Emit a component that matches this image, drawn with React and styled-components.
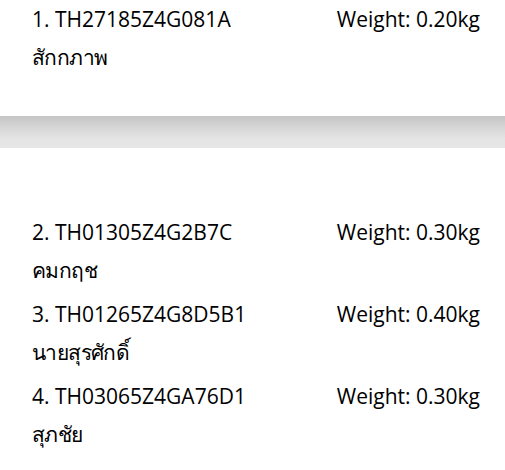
import styled, { createGlobalStyle } from "styled-components";

const Global = createGlobalStyle`
  body {
    margin: 0;
    background: #fff;
    font-family: "Open Sans", "Noto Sans", "Liberation Sans", sans-serif;
    color: #000;
  }
`;

const Section = styled.div`
  background: #fff;
  height: ${(p) => p.h}px;
  padding-top: ${(p) => p.top || 0}px;
  box-sizing: border-box;
  display: flex;
  flex-direction: column;
  gap: 6px;
`;

const Band = styled.div`
  height: 32px;
  background: linear-gradient(#c5c5c5 0%, #d8d8d8 40%, #e4e4e4 70%, #e6e6e6 100%);
`;

const Item = styled.div`
  padding: 0 25px 0 32px;
  font-size: 21px;
  line-height: 38px;
`;

const Top = styled.div`
  display: flex;
  justify-content: space-between;
`;

const Name = styled.div`
  font-size: 21px;
  letter-spacing: -0.6px;
`;

const items = [
  { code: "1. TH27185Z4G081A", w: "0.20", name: "สักกภาพ" },
  { code: "2. TH01305Z4G2B7C", w: "0.30", name: "คมกฤช" },
  { code: "3. TH01265Z4G8D5B1", w: "0.40", name: "นายสุรศักดิ์" },
  { code: "4. TH03065Z4GA76D1", w: "0.30", name: "สุภชัย" },
];

const Row = ({ it }) => (
  <Item>
    <Top>
      <span>{it.code}</span>
      <span>Weight: {it.w}kg</span>
    </Top>
    <Name>{it.name}</Name>
  </Item>
);

export default function App() {
  return (
    <>
      <Global />
      <Section h={116}>
        <Row it={items[0]} />
      </Section>
      <Band />
      <Section h={322} top={65}>
        {items.slice(1).map((it) => (
          <Row key={it.code} it={it} />
        ))}
      </Section>
    </>
  );
}
